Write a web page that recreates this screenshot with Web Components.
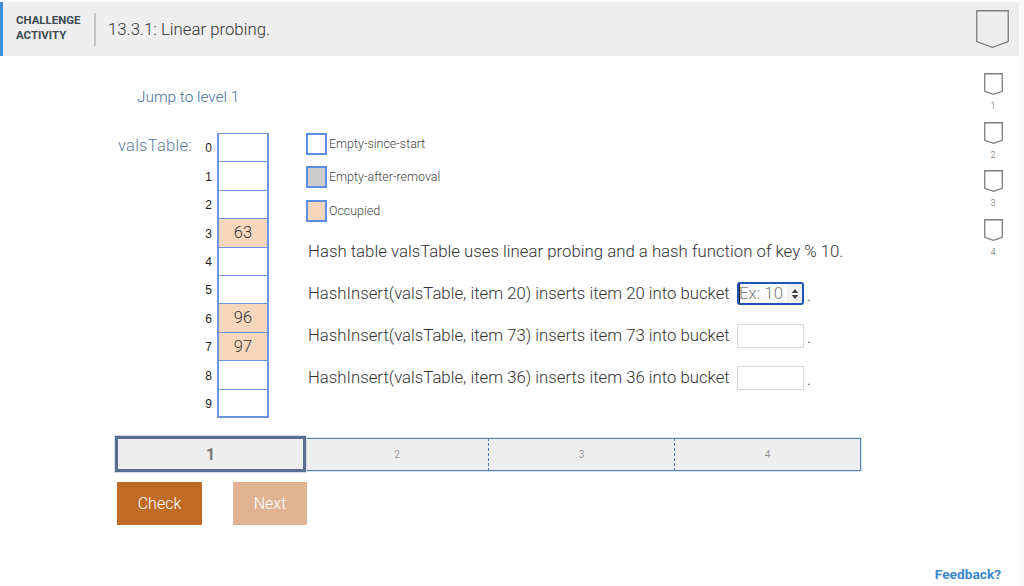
<!DOCTYPE html>
<html><head><meta charset="utf-8">
<style>html,body{margin:0;padding:0;background:#fff;width:1024px;height:586px;overflow:hidden}</style>
</head><body>
<zy-page></zy-page>
<script>
function def(name, css, html){
  customElements.define(name, class extends HTMLElement{
    connectedCallback(){
      if(this.shadowRoot) return;
      const r=this.attachShadow({mode:'open'});
      r.innerHTML='<style>'+css+'</style>'+(typeof html==='function'?html(this):html);
    }
  });
}
const shield=(w,h,c)=>`<svg width="${w}" height="${h}" viewBox="0 0 ${w} ${h}" style="display:block"><path d="M.75 .75H${w-.75}V${h-h*.17}L${w/2} ${h-.75}L.75 ${h-h*.17}Z" fill="none" stroke="${c}" stroke-width="1.3"/></svg>`;
def('zy-shield',':host{display:block}',e=>shield(+e.getAttribute('w'),+e.getAttribute('h'),e.getAttribute('c')||'#7c7c7c'));
def('zy-header',`:host{display:flex;align-items:center;box-sizing:border-box;height:54px;margin-top:2px;width:1019px;background:#eee;border-left:3px solid #3d8fd9;font-family:Roboto,sans-serif}
.k{width:78px;margin:-3px 0 0 13px;font-size:11.45px;font-weight:700;line-height:15px;color:#3f4a52}
.d{width:2px;height:33px;background:#c4c4c4;margin:0 12px 0 0}
.t{font-size:16.8px;font-weight:300;color:#333;flex:1}
zy-shield{margin-right:10px}`,
`<div class="k">CHALLENGE<br>ACTIVITY</div><div class="d"></div><div class="t">13.3.1: Linear probing.</div><zy-shield w="33" h="38"></zy-shield>`);
def('zy-rail',`:host{display:block;width:40px;margin-left:auto;margin-right:6px;padding-top:17px;font-family:Roboto,sans-serif;font-weight:300;font-size:8.5px;color:#555;text-align:center}
.i{height:48.5px;display:flex;flex-direction:column;align-items:center}
span{margin-top:6px;line-height:11px}`,
`<div class="i"><zy-shield w="19" h="22"></zy-shield><span>1</span></div><div class="i"><zy-shield w="19" h="22"></zy-shield><span>2</span></div><div class="i"><zy-shield w="19" h="22"></zy-shield><span>3</span></div><div class="i"><zy-shield w="19" h="22"></zy-shield><span>4</span></div>`);
def('hash-table',`:host{display:flex;align-items:flex-start;font-family:Roboto,sans-serif}
.n{width:77px;margin:1px 0 0 2px;font-size:16.5px;font-weight:300;color:#5c7ea3;line-height:24px;letter-spacing:.25px}
.ix{width:17px;font:12px/28.4px "Liberation Sans",sans-serif;color:#222;text-align:right;padding-right:5px;margin-top:1.4px}
.ix div{height:28.4px}
.c{box-sizing:border-box;width:52px;border:solid #6c94e2;border-width:1px 2px 0;background:#fff}
.c div{box-sizing:border-box;height:28.4px;border-bottom:1px solid #6c94e2;font-size:16.5px;font-weight:300;color:#333;text-align:center;line-height:27.5px}
.c div:last-child{border-bottom-width:2px}
.o{background:#f6d7bd}`,
`<div class="n">valsTable:</div><div class="ix">${[0,1,2,3,4,5,6,7,8,9].map(i=>`<div>${i}</div>`).join('')}</div>
<div class="c"><div></div><div></div><div></div><div class="o">63</div><div></div><div></div><div class="o">96</div><div class="o">97</div><div></div><div></div></div>`);
def('legend-item',`:host{display:flex;align-items:center;height:22px;font:300 12.45px/22px Roboto,sans-serif;color:#444}
i{display:block;box-sizing:border-box;width:21px;height:22px;border:2px solid #5b8ce6;margin-right:2px;background:var(--f,#fff)}`,`<i></i><span><slot></slot></span>`);
def('num-input',`:host{display:inline-block;box-sizing:border-box;width:67px;height:24px;border:1px solid #d3dadd;background:#fff;position:relative;vertical-align:middle}
:host([focus]){border:2px solid #1f55b4;border-radius:3px;height:23px;margin-bottom:1px}
.p{position:absolute;left:0;top:0;line-height:19px;font-size:16.8px;font-weight:300;color:#7a7a7a;border-left:1px solid #222;height:19px;text-indent:-1px}
.s{position:absolute;right:0;top:0;bottom:0;width:15px;background:#f1f1f1;display:flex;align-items:center;justify-content:center}`,
e=>e.hasAttribute('focus')?`<span class="p">Ex: 10</span><span class="s"><svg width="8" height="12" viewBox="0 0 8 12"><path d="M4 1L7.2 5H.8ZM4 11L.8 7H7.2Z" fill="#3a3a3a"/></svg></span>`:'');
def('prompt-row',`:host{display:flex;align-items:center;height:24px;font:300 16.75px/24px Roboto,sans-serif;color:#333}
.t{width:429px;white-space:nowrap;margin-top:-3px}.e{margin-left:3px;margin-top:1px}`,`<span class="t"><slot></slot></span><slot name="in"></slot><span class="e">.</span>`);
def('level-bar',`:host{display:flex;box-sizing:border-box;width:746px;height:33px;font-family:Roboto,sans-serif;background:#eee;box-shadow:0 0 0 1px #dbe4ee}
.a{box-sizing:border-box;flex:none;width:191px;height:36px;margin-top:-2px;border:3px solid #5a6e94;font-weight:700;font-size:16px;color:#777;text-align:center;line-height:32px;box-shadow:0 0 0 1px #d3dbe8;position:relative}
.s{box-sizing:border-box;flex:none;border:solid #5585b5;border-width:1px 0;height:33px;font-size:10px;font-weight:400;color:#999;text-align:center;line-height:32px;border-right:1px dashed #4a78b5}
.s:last-child{border-right:1px solid #5585b5}`,
`<div class="a">1</div><div class="s" style="width:183px">2</div><div class="s" style="width:186px">3</div><div class="s" style="width:186px">4</div>`);
def('zy-button',`:host{display:block;height:43px;color:#fff;font:300 16px/44px Roboto,sans-serif;text-align:center;background:var(--b)}`,`<slot></slot>`);
def('zy-page',`:host{display:block;position:relative;width:1024px;height:586px;overflow:hidden;font-family:Roboto,sans-serif;background:#fff}
.edge{position:absolute;right:0;top:0;bottom:0;width:5px;background:#fafafa}
.body{display:flex;width:1019px}
.main{margin-left:116px;width:760px}
.jump{margin:31px 0 0 21px;font-size:15.4px;font-weight:300;color:#466f9b;line-height:20px}
.work{display:flex;margin-top:26px}
.side{margin-left:37px;width:560px}
.leg{display:flex;flex-direction:column}
.hash{font:300 16.8px/24px Roboto,sans-serif;color:#333;margin:17px 0 0 2px;white-space:nowrap}
.rows{display:flex;flex-direction:column;gap:18px;margin:19px 0 0 2px}
level-bar{margin:20px 0 0 -1px}
.btns{display:flex;margin-top:11px;margin-left:1px}
.fb{position:absolute;right:23px;bottom:4px;font-size:13.7px;font-weight:700;color:#3a87cf;line-height:16px}`,
`<div class="edge"></div><zy-header></zy-header>
<div class="body"><div class="main">
<div class="jump">Jump to level 1</div>
<div class="work"><hash-table></hash-table>
<div class="side"><div class="leg">
<legend-item>Empty-since-start</legend-item>
<legend-item style="--f:#cdcdcd;margin-top:11px">Empty-after-removal</legend-item>
<legend-item style="--f:#f6d7bd;margin-top:12px">Occupied</legend-item></div>
<div class="hash">Hash table valsTable uses linear probing and a hash function of key % 10.</div>
<div class="rows">
<prompt-row>HashInsert(valsTable, item 20) inserts item 20 into bucket<num-input slot="in" focus></num-input></prompt-row>
<prompt-row>HashInsert(valsTable, item 73) inserts item 73 into bucket<num-input slot="in"></num-input></prompt-row>
<prompt-row>HashInsert(valsTable, item 36) inserts item 36 into bucket<num-input slot="in"></num-input></prompt-row>
</div></div></div>
<level-bar></level-bar>
<div class="btns"><zy-button style="--b:#bf6b26;width:85px">Check</zy-button><zy-button style="--b:#e0b493;width:74px;margin-left:31px">Next</zy-button></div>
</div><zy-rail></zy-rail></div>
<div class="fb">Feedback?</div>`);
</script>
</body></html>
